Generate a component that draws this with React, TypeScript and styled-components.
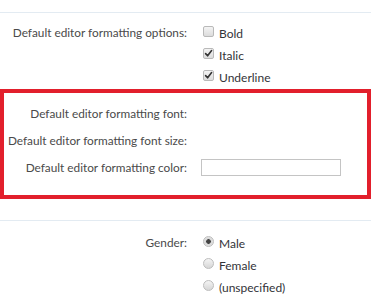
import React from 'react';
import styled, { createGlobalStyle } from 'styled-components';

const GlobalStyle = createGlobalStyle`
    body {
        margin: 0;
        background: #ffffff;
        font-family: Lato, "Open Sans", sans-serif;
    }
`

type Choice = { label: string; checked: boolean };

const formatOptions: Choice[] = [
    { label: 'Bold', checked: false },
    { label: 'Italic', checked: true },
    { label: 'Underline', checked: true },
];

const genders: Choice[] = [
    { label: 'Male', checked: true },
    { label: 'Female', checked: false },
    { label: '(unspecified)', checked: false },
];

function CheckMark() {
    return (
        <svg width="9" height="9" viewBox="0 0 9 9">
            <path d="M1.6 4.6 L3.6 6.8 L7.6 1.6" fill="none" stroke="#333" strokeWidth="1.6" strokeLinecap="round" strokeLinejoin="round"/>
        </svg>
    );
}

function App() {
    return (
        <Page>
            <GlobalStyle/>
            <Divider/>
            <Section>
                <Row>
                    <Label>Default editor formatting options:</Label>
                    <ChoiceList>
                        {formatOptions.map(o => (
                            <ChoiceItem key={o.label}>
                                <CheckBox>{o.checked && <CheckMark/>}</CheckBox>
                                {o.label}
                            </ChoiceItem>
                        ))}
                    </ChoiceList>
                </Row>
            </Section>
            <Highlight>
                <BoxRow>
                    <Label $inset>Default editor formatting font:</Label>
                </BoxRow>
                <BoxRow>
                    <Label $inset>Default editor formatting font size:</Label>
                </BoxRow>
                <BoxRow>
                    <Label $inset>Default editor formatting color:</Label>
                    <ColorInput type="text"/>
                </BoxRow>
            </Highlight>
            <Divider $gap/>
            <Section $top={11}>
                <Row>
                    <Label>Gender:</Label>
                    <ChoiceList>
                        {genders.map(g => (
                            <ChoiceItem key={g.label}>
                                <Radio $checked={g.checked}/>
                                {g.label}
                            </ChoiceItem>
                        ))}
                    </ChoiceList>
                </Row>
            </Section>
        </Page>
    );
}

const Page = styled.div`
    width: 371px;
    height: 300px;
    overflow: hidden;
    padding-top: 12px;
    box-sizing: border-box;
`
const Divider = styled.div<{ $gap?: boolean }>`
    height: 1px;
    background: #e3ebf2;
    margin-top: ${p => (p.$gap ? '21px' : '0')};
`
const Section = styled.div<{ $top?: number }>`
    padding-top: ${p => p.$top ?? 9}px;
`
const Row = styled.div`
    display: grid;
    grid-template-columns: 187px 1fr;
    column-gap: 16px;
    align-items: start;
`
const Label = styled.div<{ $inset?: boolean }>`
    width: ${p => (p.$inset ? '183px' : '187px')};
    text-align: right;
    font-size: 11.8px;
    line-height: 22px;
    color: #4a4a4a;
    white-space: nowrap;
`
const ChoiceList = styled.div`
    display: flex;
    flex-direction: column;
`
const ChoiceItem = styled.div`
    display: flex;
    align-items: center;
    gap: 5px;
    height: 22px;
    font-size: 12px;
    color: #333338;
`
const CheckBox = styled.span`
    width: 11px;
    height: 11px;
    box-sizing: border-box;
    border: 1px solid #b9b9b9;
    border-radius: 2px;
    background: linear-gradient(#f4f4f4, #dcdcdc);
    display: flex;
    align-items: center;
    justify-content: center;
    margin-top: -3px;
`
const Radio = styled.span<{ $checked: boolean }>`
    width: 11px;
    height: 11px;
    box-sizing: border-box;
    border: 1px solid #bdbdbd;
    border-radius: 50%;
    background: ${p => p.$checked
        ? 'radial-gradient(circle, #444 0 2px, #d6d6d6 2.6px, #eeeeee 100%)'
        : 'linear-gradient(#f4f4f4, #d6d6d6)'};
    margin-top: -3px;
`
const Highlight = styled.div`
    margin-top: 1px;
    width: 371px;
    height: 110px;
    box-sizing: border-box;
    border: 4px solid #e21f2c;
    padding-top: 7px;
`
const BoxRow = styled.div`
    display: flex;
    align-items: center;
    gap: 14px;
    height: 27px;
`
const ColorInput = styled.input`
    width: 140px;
    height: 17px;
    box-sizing: border-box;
    border: 1px solid #c4c4c4;
    background: #ffffff;
    margin: 0;
    padding: 0;
`

export default App;
